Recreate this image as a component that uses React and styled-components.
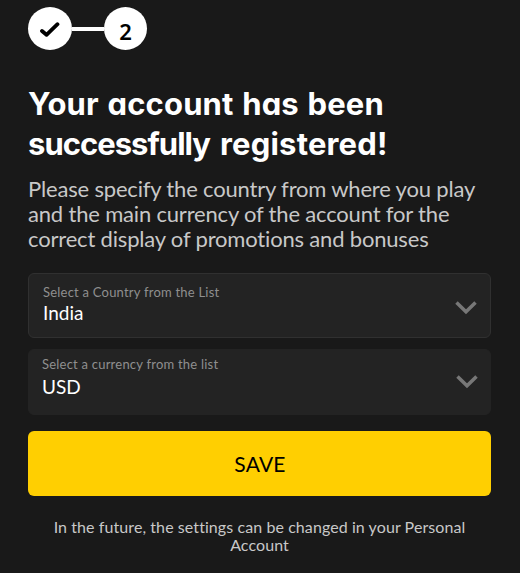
import React, { useState } from 'react'
import styled, { createGlobalStyle } from 'styled-components'

const GlobalStyle = createGlobalStyle`
  * {
    box-sizing: border-box;
  }

  body {
    margin: 0;
    background: #191919;
    font-family: Lato, 'Liberation Sans', sans-serif;
    font-variant-ligatures: none;
  }
`

const Container = styled.main`
  width: 520px;
  height: 573px;
  padding: 7px 29px 0 28px;
  overflow: hidden;
  background: #191919;
`

const Steps = styled.div`
  display: flex;
  align-items: center;
  height: 43px;
`

const Step = styled.div`
  display: flex;
  align-items: center;
  justify-content: center;
  width: ${(props) => props.$width}px;
  height: 43px;
  padding-top: ${(props) => props.$drop || 0}px;
  border-radius: 50%;
  background: #fff;
  color: #000;
  font-family: 'Noto Sans', sans-serif;
  font-size: 22px;
  font-weight: 600;
`

const StepLine = styled.div`
  width: 32px;
  height: 4px;
  background: #fff;
`

const Title = styled.h1`
  margin: 34px 0 0;
  color: #fff;
  font-family: Inter, sans-serif;
  font-size: 31px;
  font-weight: 700;
  line-height: 40px;
  font-feature-settings: 'cv11' 1;
  white-space: nowrap;
`

const TitlePart = styled.span`
  letter-spacing: ${(props) => props.$spacing}px;
  word-spacing: ${(props) => props.$words || 0}px;
`

const Description = styled.p`
  margin: 12px 0 0;
  color: #c8c8c8;
  font-size: 22px;
  line-height: 25px;
  letter-spacing: -0.18px;
  white-space: nowrap;
`

const SelectBox = styled.button`
  display: flex;
  align-items: center;
  justify-content: space-between;
  width: 100%;
  height: ${(props) => props.$height}px;
  margin: ${(props) => props.$top}px 0 0;
  padding: ${(props) => props.$padding};
  border: 1px solid ${(props) => props.$border};
  border-radius: 6px;
  background: #232323;
  font-family: inherit;
  text-align: left;
`

const SelectText = styled.span`
  display: flex;
  flex-direction: column;
  align-self: flex-start;
`

const Label = styled.span`
  color: #8f8f8f;
  font-size: 13px;
  line-height: 16px;
  letter-spacing: 0.22px;
`

const Value = styled.span`
  margin-top: ${(props) => props.$gap}px;
  color: #fff;
  font-size: 19px;
  line-height: 22px;
`

const SaveButton = styled.button`
  display: block;
  width: 100%;
  height: 65px;
  margin: 16px 0 0;
  padding: 0 0 0 1px;
  border: 0;
  border-radius: 6px;
  background: #ffcf01;
  color: #000;
  font-family: inherit;
  font-size: 21px;
  letter-spacing: 0.2px;
`

const Note = styled.p`
  margin: 22px 0 0;
  color: #c8c8c8;
  font-size: 16px;
  line-height: 18px;
  letter-spacing: 0.08px;
  text-align: center;
  white-space: nowrap;
`

const CheckIcon = () => (
  <svg width='20' height='16' viewBox='0 0 20 16' fill='none'>
    <path d='M2 10L6.5 13.8L17.5 3.2' stroke='#000' strokeWidth='3.8' strokeLinecap='round' strokeLinejoin='round' />
  </svg>
)

const Chevron = () => (
  <svg width='22' height='14' viewBox='0 0 22 14' fill='none'>
    <path d='M1.5 1.5L11 10.8L20.5 1.5' stroke='#777' strokeWidth='3.5' />
  </svg>
)

const App = () => {
  const [country] = useState('India')
  const [currency] = useState('USD')

  return (
    <Container>
      <GlobalStyle />
      <Steps>
        <Step $width={44}>
          <CheckIcon />
        </Step>
        <StepLine />
        <Step $width={43} $drop={4}>2</Step>
      </Steps>
      <Title>
        <TitlePart $spacing={0.15} $words={1.2}>Your account has been</TitlePart>
        <br />
        <TitlePart $spacing={-0.98} $words={3.6}>successfully </TitlePart>
        <TitlePart $spacing={0.2}>registered!</TitlePart>
      </Title>
      <Description>
        Please specify the country from where you play
        <br />
        and the main currency of the account for the
        <br />
        correct display of promotions and bonuses
      </Description>
      <SelectBox type='button' $height={65} $top={22} $padding='10px 13px 5px 14px' $border='#303030'>
        <SelectText>
          <Label>Select a Country from the List</Label>
          <Value $gap={2}>{country}</Value>
        </SelectText>
        <Chevron />
      </SelectBox>
      <SelectBox type='button' $height={66} $top={11} $padding='6px 12px 6px 13px' $border='#232323'>
        <SelectText>
          <Label>Select a currency from the list</Label>
          <Value $gap={4}>{currency}</Value>
        </SelectText>
        <Chevron />
      </SelectBox>
      <SaveButton type='button'>SAVE</SaveButton>
      <Note>
        In the future, the settings can be changed in your Personal
        <br />
        Account
      </Note>
    </Container>
  )
}

export default App
